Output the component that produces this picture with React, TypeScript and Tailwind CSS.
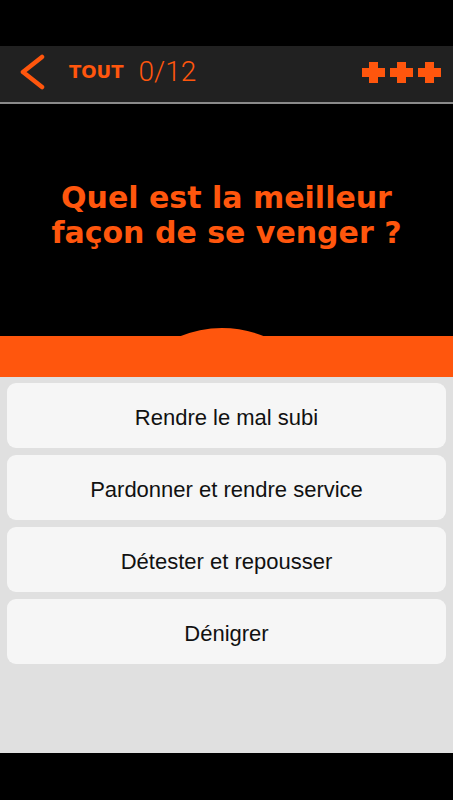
import React from 'react'

const answers = [
  'Rendre le mal subi',
  'Pardonner et rendre service',
  'Détester et repousser',
  'Dénigrer',
]

const Cross: React.FC = () => (
  <svg width="23" height="21" viewBox="0 0 23 21" className="block">
    <path d="M7 0h9v6h7v9h-7v6H7v-6H0V6h7z" fill="#ff560d" />
  </svg>
)

const App: React.FC = () => {
  return (
    <div className="w-[453px] h-[800px] bg-black flex flex-col overflow-hidden">
      {/* status bar */}
      <div className="h-[46px] shrink-0 bg-black" />

      {/* header */}
      <div className="h-[56px] shrink-0 bg-[#212121] flex items-center pl-[18px] pr-[12px] pb-[4px]">
        <svg width="28" height="36" viewBox="0 0 28 36" className="block">
          <path d="M24 3L5 18l19 15" fill="none" stroke="#ff560d" strokeWidth="4.5" strokeLinecap="round" strokeLinejoin="round" />
        </svg>
        <span
          className="ml-[23px] text-[18px] leading-none font-black text-[#ff560d]"
          style={{ fontFamily: '"DejaVu Sans", sans-serif' }}
        >
          TOUT
        </span>
        <span
          className="ml-[15px] text-[28px] leading-none text-[#ff560d]"
          style={{ fontFamily: '"Roboto", "Liberation Sans", sans-serif', fontWeight: 300 }}
        >
          0/12
        </span>
        <div className="ml-auto flex gap-[5px]">
          <Cross />
          <Cross />
          <Cross />
        </div>
      </div>
      <div className="h-[2px] shrink-0 bg-[#8a8a8a]" />

      {/* question */}
      <div className="h-[232px] shrink-0 bg-black flex items-center justify-center pb-[10px]">
        <h1
          className="text-center text-[30px] leading-[35px] font-bold text-[#ff560d]"
          style={{ fontFamily: '"DejaVu Sans", "Verdana", sans-serif' }}
        >
          Quel est la meilleur
          <br />
          façon de se venger ?
        </h1>
      </div>

      {/* orange band */}
      <div className="relative h-[41px] shrink-0 bg-[#ff560d]">
        <svg
          width="88"
          height="10"
          viewBox="0 0 88 10"
          className="absolute left-[178px] top-[-9px] block"
        >
          <path d="M0 10Q44 -8 88 10z" fill="#ff560d" />
        </svg>
      </div>

      {/* answers */}
      <div className="flex-1 bg-[#e0e0e0] flex flex-col gap-[7px] px-[7px] pt-[6px]">
        {answers.map((a) => (
          <button
            key={a}
            className="h-[65px] shrink-0 rounded-[9px] bg-[#f6f6f6] flex items-center justify-center pt-[3px] text-[22px] text-[#111]"
            style={{ fontFamily: '"Liberation Sans", Arial, sans-serif' }}
          >
            {a}
          </button>
        ))}
      </div>

      {/* nav bar */}
      <div className="h-[47px] shrink-0 bg-black" />
    </div>
  )
}

export default App
